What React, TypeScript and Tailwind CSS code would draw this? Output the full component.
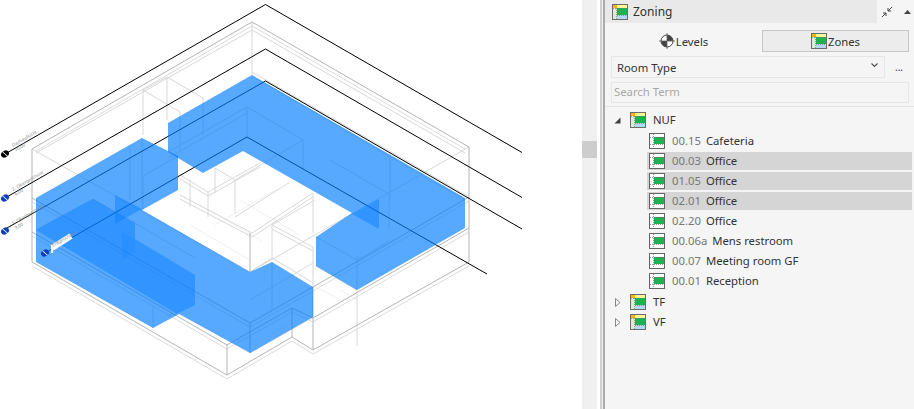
import React from "react";

const font = { fontFamily: '"Noto Sans", "Liberation Sans", sans-serif' };

// wireframe: main double edges
const darkWire = [
  "32,149 252,22 469,147 469,262",
  "32,149 32,262 227,375 227,345 32,232",
  "32,198 250,323 250,353",
  "227,375 292,337 313,350 469,262",
  "227,345 292,308 313,318 469,228",
  "250,323 313,287 469,197",
  "313,287 313,350",
  "292,308 292,337",
  "250,272 250,233",
];
const darkWire2 = [
  "36,151 252,26 465,149",
  "32,236 227,349",
  "32,266 227,379",
  "227,379 292,341 313,354 469,266",
  "227,349 292,312 313,322 469,232",
  "250,327 313,291 469,201",
  "32,202 250,327",
];
const midWire = [
  "36,153 252,30 465,153",
  "252,22 252,75",
  "252,72 469,197",
  "252,76 465,200",
  "32,149 250,272",
  "469,147 250,272",
  "143,90 143,135",
  "167,77 167,120",
  "143,90 167,77 203,98 203,135",
  "143,90 180,112 180,150",
  "180,175 208,192 260,163",
  "180,179 208,196 260,167",
  "215,168 215,193",
  "215,168 235,180 235,213",
  "190,180 190,207",
  "180,195 252,233 313,193",
  "180,199 252,237 313,197",
  "235,217 290,182",
  "272,225 272,258",
  "272,225 313,247 313,273",
  "272,229 313,251",
  "272,225 315,200",
  "313,193 313,233",
  "208,192 208,217",
  "250,272 272,258",
  "313,272 313,287",
  "272,258 292,270 313,283",
  "247,107 303,140 303,170",
  "247,107 247,137",
  "247,107 168,152",
  "247,113 170,157",
  "303,140 235,180",
  "390,153 390,200",
  "330,160 389,194 389,230",
  "316,266 357,290 357,346",
  "357,290 357,255",
  "316,237 357,260 389,241",
  "178,156 143,176 143,210",
  "130,145 130,200",
  "142,138 142,210",
  "36,230 93,199 195,258",
  "153,328 153,305",
  "250,353 313,317",
  "250,300 313,263",
  "272,262 272,310",
];
const faintWire = [
  "200,205 262,241",
  "215,225 275,190",
  "190,225 250,260",
  "300,235 240,200",
  "340,290 357,300",
  "270,335 292,322",
  "340,300 313,285",
];

// black level lines, drawn under the translucent zones
const levelLines = [
  "5,154 265.5,4.5 522,152.5",
  "5,198 265.5,49 522,197.5",
  "7,228 265.5,81 522,229",
  "45,253 247,137 487,274",
];

const zones = [
  "168,123 252,75 465,198 465,228 357,290 316,266 316,237 352,213 243,151 203,173 168,152",
  "36,198 142,138 178,156 178,190 142,210 250,272 272,262 313,287 313,317 250,353 179,314 153,328 36,262",
];
const overlaps = [
  "36,230 93,199 135,223 135,239 195,275 195,305 177,314",
  "115,195 142,209 115,224",
  "379,199 379,229 352,214",
];

function LevelMark({ x, y, color }: { x: number; y: number; color: string }) {
  return (
    <g transform={`translate(${x} ${y}) rotate(-30)`}>
      <ellipse rx="4.2" ry="3.2" fill={color} />
      <path d="M-1 -3.2L1 3.2" stroke="#fff" strokeWidth="0.9" />
    </g>
  );
}

function LevelLabel({ x, y, name, height }: { x: number; y: number; name: string; height?: string }) {
  return (
    <g transform={`translate(${x} ${y}) rotate(-30)`} fill="#8a8a8a" fontSize="4.6" style={font}>
      <text>{name}</text>
      {height && <text y="5.4">{height}</text>}
    </g>
  );
}

function Model() {
  return (
    <svg viewBox="0 0 582 409" className="h-[409px] w-[582px]">
      <g fill="none" strokeWidth="1">
        {faintWire.map((p) => (
          <polyline key={p} points={p} stroke="#f0f0f0" />
        ))}
        {midWire.map((p) => (
          <polyline key={p} points={p} stroke="#d8d8d8" />
        ))}
        {darkWire2.map((p) => (
          <polyline key={p} points={p} stroke="#dcdcdc" />
        ))}
        {darkWire.map((p) => (
          <polyline key={p} points={p} stroke="#b4b4b4" />
        ))}
        {levelLines.map((p) => (
          <polyline key={p} points={p} stroke="#000" />
        ))}
      </g>
      {zones.map((p) => (
        <polygon key={p} points={p} fill="#007bff" fillOpacity="0.66" />
      ))}
      {overlaps.map((p) => (
        <polygon key={p} points={p} fill="#007bff" fillOpacity="0.42" />
      ))}
      <polygon points="122,232 135,240 135,252 122,260" fill="#007bff" fillOpacity="0.15" />
      <polyline points="52,248 71,236" stroke="#fff" strokeWidth="6" />
      <polyline points="52,246 52,253" stroke="#fff" strokeWidth="2" />
      <LevelMark x={5} y={154} color="#000" />
      <LevelMark x={5} y={198} color="#0a3fc0" />
      <LevelMark x={5} y={231} color="#0a3fc0" />
      <LevelMark x={45} y={253} color="#0a3fc0" />
      <LevelLabel x={13} y={147} name="Dachaufsicht" height="10,00" />
      <LevelLabel x={13} y={191} name="2. Obergeschoss" height="6,00" />
      <LevelLabel x={13} y={225} name="1. Obergeschoss" height="3,00" />
      <LevelLabel x={53} y={247} name="Erdgeschoss" />
    </svg>
  );
}

function ZoneIcon() {
  return (
    <svg viewBox="0 0 16 16" className="h-4 w-4 shrink-0">
      <rect x="0.5" y="0.5" width="15" height="15" fill="#fff" />
      <rect x="1" y="1" width="14" height="4" fill="#fff59a" />
      <rect x="1" y="1" width="4" height="3" fill="#ffb400" />
      <rect x="1" y="4" width="4" height="11" fill="#d8eed4" />
      <rect x="5" y="11" width="10" height="4" fill="#b5d8f2" />
      <rect x="5" y="4" width="10" height="7" fill="#1fb14f" />
      <path d="M4.5 4V15M1 4.5H15M5 11.5H15" stroke="#777" strokeWidth="0.7" strokeDasharray="1 1" fill="none" />
      <rect x="0.5" y="0.5" width="15" height="15" fill="none" stroke="#6b6b6b" />
    </svg>
  );
}

function RoomIcon() {
  return (
    <svg viewBox="0 0 16 16" className="h-4 w-4 shrink-0">
      <rect x="0.5" y="0.5" width="15" height="15" fill="#fff" stroke="#666" />
      <rect x="5" y="4" width="10" height="7" fill="#1fb14f" />
      <path d="M4.5 1V15M1 4.5H15M1 11.5H15" stroke="#666" strokeWidth="0.7" strokeDasharray="1 1" fill="none" />
    </svg>
  );
}

function LevelsIcon() {
  return (
    <svg viewBox="0 0 16 16" className="h-4 w-4 shrink-0">
      <circle cx="8" cy="8" r="6" fill="#fff" stroke="#444" />
      <path d="M8 2A6 6 0 0 1 14 8H8Z" fill="#444" />
      <path d="M8 14A6 6 0 0 1 2 8H8Z" fill="#444" />
      <path d="M0 8H16M8 0V16" stroke="#666" strokeWidth="0.8" />
    </svg>
  );
}

function Expanded() {
  return (
    <svg viewBox="0 0 7 7" className="h-[7px] w-[7px]">
      <path d="M6.5 0.5V6.5H0.5Z" fill="#404040" />
    </svg>
  );
}

function Collapsed() {
  return (
    <svg viewBox="0 0 6 9" className="h-[9px] w-[6px]">
      <path d="M0.5 0.5L5 4.5L0.5 8.5Z" fill="#f5f5f5" stroke="#888" />
    </svg>
  );
}

const rooms = [
  { no: "00.15", name: "Cafeteria", on: false },
  { no: "00.03", name: "Office", on: true },
  { no: "01.05", name: "Office", on: true },
  { no: "02.01", name: "Office", on: true },
  { no: "02.20", name: "Office", on: false },
  { no: "00.06a", name: "Mens restroom", on: false },
  { no: "00.07", name: "Meeting room GF", on: false },
  { no: "00.01", name: "Reception", on: false },
];

function Group({ name, open }: { name: string; open?: boolean }) {
  return (
    <div className="flex h-5 items-center">
      <div className="flex w-[25px] justify-end pr-[9px]">{open ? <Expanded /> : <Collapsed />}</div>
      <ZoneIcon />
      <span className="ml-[7px] pt-px">{name}</span>
    </div>
  );
}

function Panel() {
  return (
    <div className="flex h-[409px] w-[309px] flex-col bg-[#f5f5f5] text-[11.3px] text-[#333]" style={font}>
      <div className="flex h-[23px] shrink-0">
        <div className="flex w-[272px] items-center gap-[5px] bg-[#e9e9e9] pl-[7px]">
          <ZoneIcon />
          <span className="pt-[1px] text-[12px]">Zoning</span>
        </div>
        <div className="flex items-center gap-[11px] pl-[4px]">
          <svg viewBox="0 0 12 12" className="h-3 w-3">
            <path d="M11 1L7 5M7 2V5H10M1 11L5 7M2 7H5V10" fill="none" stroke="#444" strokeWidth="1" />
          </svg>
          <svg viewBox="0 0 7 4" className="h-1 w-[7px]">
            <path d="M3.5 0L7 4H0Z" fill="#444" />
          </svg>
        </div>
      </div>
      <div className="mt-[7px] ml-[6px] mr-[5px] flex h-[22px] shrink-0">
        <div className="flex w-[151px] items-center justify-center gap-[1px] pr-[6px]">
          <LevelsIcon />
          <span className="pt-[2px]">Levels</span>
        </div>
        <div className="flex flex-1 items-center justify-center gap-[1px] border border-[#c6c6c6] bg-[#ececec]">
          <ZoneIcon />
          <span className="pt-[2px]">Zones</span>
        </div>
      </div>
      <div className="mt-[4px] ml-[6px] mr-[5px] flex h-[22px] shrink-0 items-center">
        <div className="flex h-full w-[274px] items-center justify-between border border-[#e6e6e6] pl-[5px] pr-[6px]">
          <span className="pt-[2px]">Room Type</span>
          <svg viewBox="0 0 7 5" className="mb-[3px] h-[5px] w-[7px]">
            <path d="M0.5 0.5L3.5 3.5L6.5 0.5" fill="none" stroke="#555" strokeWidth="1.2" />
          </svg>
        </div>
        <span className="ml-[10px] text-[10px] leading-none">...</span>
      </div>
      <div className="mt-[4px] ml-[6px] mr-[5px] flex h-[21px] shrink-0 items-center border border-[#e6e6e6] pl-[2px] text-[#a8a8a8]">
        Search Term
      </div>
      <div className="mt-[3px] h-px shrink-0 bg-[#e2e2e2]" />
      <div className="mt-[3px]">
        <Group name="NUF" open />
        <div className="mt-px">
          {rooms.map((r) => (
            <div key={r.no} className="flex h-5 items-center py-px pl-[42px]">
              <div className={r.on ? "flex h-[18px] w-[265px] items-center gap-[6px] bg-[#d5d5d5] pl-[2px]" : "flex h-[18px] w-[265px] items-center gap-[6px] pl-[2px]"}>
                <RoomIcon />
                <span className="ml-px pt-px text-[#777]">{r.no}</span>
                <span className="-ml-px pt-px">{r.name}</span>
              </div>
            </div>
          ))}
        </div>
        <div className="mt-px">
          <Group name="TF" />
          <Group name="VF" />
        </div>
      </div>
    </div>
  );
}

export default function App() {
  return (
    <div className="flex h-[409px] w-[914px] overflow-hidden bg-white">
      <Model />
      <div className="h-full w-[15px] shrink-0 bg-[#f0f0f0] pt-[141px]">
        <div className="h-[17px] bg-[#cdcdcd]" />
      </div>
      <div className="h-full w-[3px] shrink-0 bg-white" />
      <div className="h-full w-[2px] shrink-0 bg-[#d0d0d0]" />
      <div className="h-full w-px shrink-0 bg-[#f0f0f0]" />
      <div className="h-full w-[2px] shrink-0 bg-[#ababab]" />
      <Panel />
    </div>
  );
}
